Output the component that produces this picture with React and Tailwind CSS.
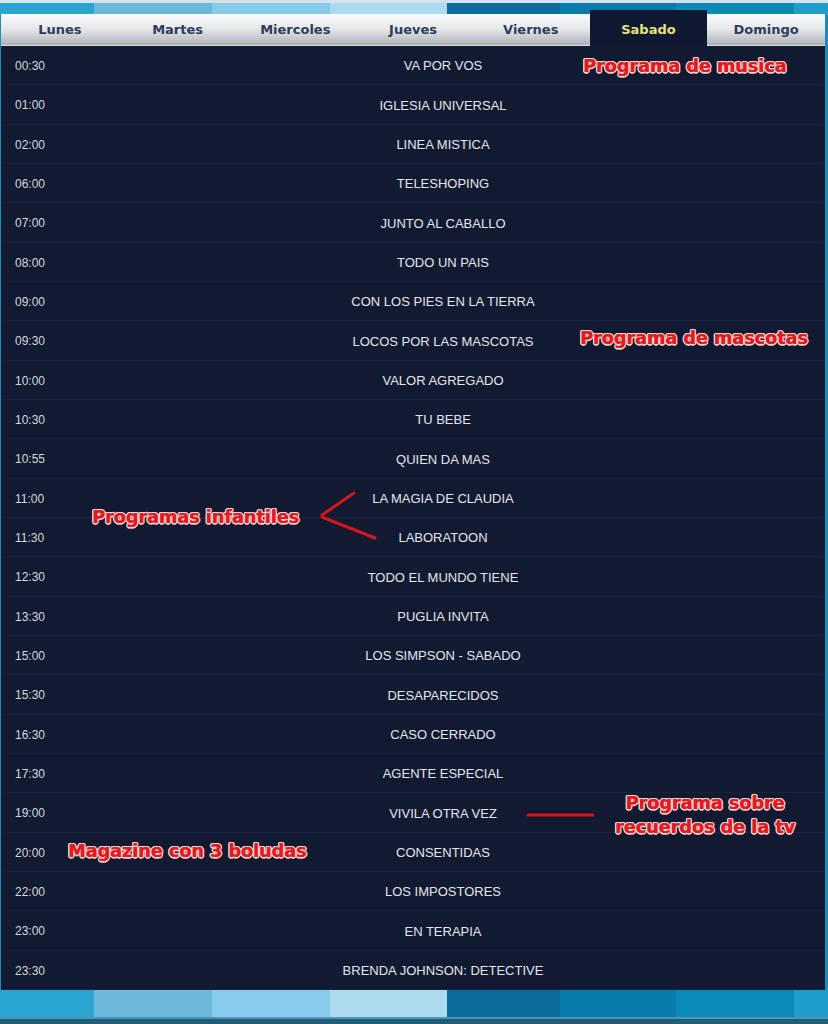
import React from 'react';

const stripes = [
  { w: 'w-[94px]', c: 'bg-[#2aa4d0]' },
  { w: 'w-[118px]', c: 'bg-[#6cb7da]' },
  { w: 'w-[118px]', c: 'bg-[#86cbea]' },
  { w: 'w-[117px]', c: 'bg-[#acdbf0]' },
  { w: 'w-[113px]', c: 'bg-[#0b6c9c]' },
  { w: 'w-[116px]', c: 'bg-[#0a7cab]' },
  { w: 'w-[118px]', c: 'bg-[#0b8ab7]' },
  { w: 'flex-1', c: 'bg-[#1f9ecb]' },
];

const days = ['Lunes', 'Martes', 'Miercoles', 'Jueves', 'Viernes', 'Sabado', 'Domingo'];

const schedule = [
  ['00:30', 'VA POR VOS'],
  ['01:00', 'IGLESIA UNIVERSAL'],
  ['02:00', 'LINEA MISTICA'],
  ['06:00', 'TELESHOPING'],
  ['07:00', 'JUNTO AL CABALLO'],
  ['08:00', 'TODO UN PAIS'],
  ['09:00', 'CON LOS PIES EN LA TIERRA'],
  ['09:30', 'LOCOS POR LAS MASCOTAS'],
  ['10:00', 'VALOR AGREGADO'],
  ['10:30', 'TU BEBE'],
  ['10:55', 'QUIEN DA MAS'],
  ['11:00', 'LA MAGIA DE CLAUDIA'],
  ['11:30', 'LABORATOON'],
  ['12:30', 'TODO EL MUNDO TIENE'],
  ['13:30', 'PUGLIA INVITA'],
  ['15:00', 'LOS SIMPSON - SABADO'],
  ['15:30', 'DESAPARECIDOS'],
  ['16:30', 'CASO CERRADO'],
  ['17:30', 'AGENTE ESPECIAL'],
  ['19:00', 'VIVILA OTRA VEZ'],
  ['20:00', 'CONSENTIDAS'],
  ['22:00', 'LOS IMPOSTORES'],
  ['23:00', 'EN TERAPIA'],
  ['23:30', 'BRENDA JOHNSON: DETECTIVE'],
];

const Stripes = ({ h }) => (
  <div className={`flex ${h}`}>
    {stripes.map((s, i) => (
      <div key={i} className={`${s.w} ${s.c}`} />
    ))}
  </div>
);

// red label with a pale outline, like the hand-made notes on the screenshot
const Note = ({ className, children }) => (
  <div
    className={`absolute font-['DejaVu_Sans',sans-serif] font-bold text-[17.6px] leading-[20px] text-[#e11b22] whitespace-nowrap [text-shadow:0.4px_0_0_#e11b22,1.2px_0_0_#f6d6d6,-1px_0_0_#f6d6d6,0_1px_0_#f6d6d6,0_-1px_0_#f6d6d6,1px_1px_0_#f6d6d6,-1px_-1px_0_#f6d6d6,1px_-1px_0_#f6d6d6,-1px_1px_0_#f6d6d6,1.7px_0_0_#c9a0a8,-1.5px_0_0_#c9a0a8,0_1.5px_0_#c9a0a8,0_-1.5px_0_#c9a0a8] ${className}`}
  >
    {children}
  </div>
);

function App() {
  return (
    <div className="relative w-[828px] h-[1024px] bg-[#1c8cbc] overflow-hidden font-['Liberation_Sans',Arial,sans-serif]">
      <div className="h-[3px] bg-[#d5e3ee]" />
      <Stripes h="h-[11px]" />

      <div className="relative flex -mt-[4px] ml-[1px] mr-[3px]">
        {days.map((d) => {
          const active = d === 'Sabado';
          return (
            <div
              key={d}
              className={
                active
                  ? "flex-1 h-[36px] pt-[4px] flex items-center justify-center bg-[#0e1830] text-[#e6e37e] font-['DejaVu_Sans',sans-serif] font-bold text-[13px]"
                  : "flex-1 h-[32px] mt-[4px] flex items-center justify-center bg-gradient-to-b from-[#fbfcfc] via-[#e4e6e8] to-[#aeb2b6] border-b border-[#d8dcdf] text-[#2d3c5e] font-['DejaVu_Sans',sans-serif] font-bold text-[13px]"
              }
            >
              {d}
            </div>
          );
        })}
      </div>

      <div className="relative ml-[1px] mr-[3px] h-[944px] bg-[#121a32] flex flex-col">
        {schedule.map(([t, name]) => (
          <div key={t} className="flex items-center h-[39.33px] pt-[2px] border-b border-[#19233c] last:border-b-0">
            <div className="w-[60px] pl-[14px] text-[12px] text-[#d3d7df]">{t}</div>
            <div className="flex-1 text-center text-[13px] text-[#e2e5ec]">{name}</div>
          </div>
        ))}

        <Note className="left-[582px] top-[10px]">Programa de musica</Note>
        <Note className="left-[579px] top-[282px]">Programa de mascotas</Note>
        <Note className="left-[91px] top-[461px]">Programas infantiles</Note>
        <Note className="left-[614px] top-[745px] text-center leading-[24px]">
          Programa sobre
          <br />
          recuerdos de la tv
        </Note>
        <Note className="left-[67px] top-[795px]">Magazine con 3 boludas</Note>

        <svg className="absolute left-0 top-0" width="824" height="944" viewBox="1 46 824 944">
          <g stroke="#d4161d" strokeWidth="3" strokeLinecap="round" fill="none">
            <line x1="354" y1="493" x2="322" y2="515" />
            <line x1="322" y1="517" x2="375" y2="538" />
            <line x1="528" y1="815" x2="593" y2="815" />
          </g>
        </svg>
      </div>

      <Stripes h="h-[27px]" />
      <div className="h-[2px] bg-[#4f95b6]" />
      <div className="h-[10px] bg-[#235c76]" />
    </div>
  );
}

export default App;
